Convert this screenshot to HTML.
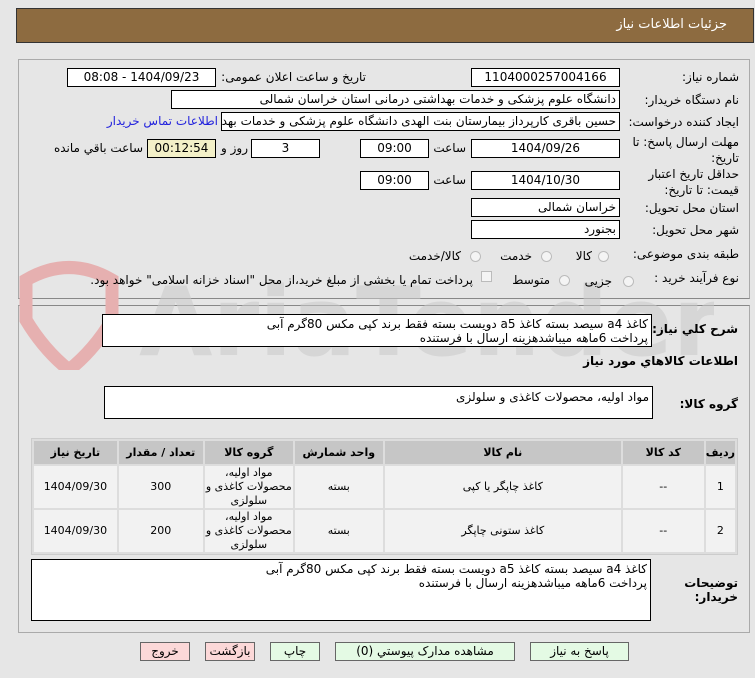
<!DOCTYPE html>
<html><head><meta charset="utf-8"><style>
*{box-sizing:border-box;margin:0;padding:0}
body{width:755px;height:678px;background:#e6e6e6;font-family:"DejaVu Sans","Liberation Sans",sans-serif;font-size:12px;color:#000;position:relative;overflow:hidden;direction:rtl}
.a{position:absolute;white-space:nowrap}
.inp{position:absolute;background:#fff;border:1px solid #000;height:19px;line-height:17px;padding:0 3px;white-space:nowrap;overflow:hidden;font-size:12px}
.c{text-align:center}
.lbl{position:absolute;white-space:nowrap;text-align:right}
.ta{position:absolute;background:#fff;border:1px solid #000;padding:2px 3px;line-height:20px;font-size:12px}
.rad{display:inline-block;width:11px;height:11px;border-radius:50%;border:1px solid #bbb;background:#f4f4f4;vertical-align:middle}
table{position:absolute;border-collapse:separate;border-spacing:2px;background:#ddd;border:1px solid #ccc}
td,th{text-align:center;font-size:11px}
th{background:#c6c6c6;height:23px;font-weight:bold}
td{background:#f2f2f2;height:41px;line-height:14px}
.btn{position:absolute;height:19px;border:1px solid #666;line-height:17px;text-align:center;font-size:12px}
</style></head><body>
<div class="a" style="left:16px;top:8px;width:738px;height:35px;background:#8d6b40;border:1px solid #333"></div>
<div class="a" style="right:28px;top:17px;color:#fff;font-size:13px">جزئیات اطلاعات نیاز</div>
<div class="a" style="left:18px;top:59px;width:732px;height:240px;border:1px solid #aaa;border-bottom:1px solid #888"></div>
<div class="a" style="left:18px;top:305px;width:732px;height:328px;border:1px solid #aaa;border-top:1px solid #888"></div>
<!-- watermark -->
<svg class="a" style="left:14px;top:250px" width="700" height="120"><path d="M12 30 Q55 5 98 30 L98 70 Q80 100 55 120 Q30 100 12 70Z" fill="none" stroke="#e6b0b0" stroke-width="13"/><text x="125" y="105" font-size="95" font-family="DejaVu Sans" font-weight="bold" fill="#cacaca" opacity="0.55" direction="ltr">AriaTender.net</text></svg>

<div class="lbl" style="right:16px;top:70px">شماره نیاز:</div>
<div class="inp c" style="left:471px;top:68px;width:149px">1104000257004166</div>
<div class="lbl" style="right:389px;top:70px">تاریخ و ساعت اعلان عمومی:</div>
<div class="inp c" style="left:67px;top:68px;width:149px">1404/09/23 - 08:08</div>

<div class="lbl" style="right:16px;top:93px">نام دستگاه خریدار:</div>
<div class="inp" style="left:171px;top:90px;width:449px">دانشگاه علوم پزشکی و خدمات بهداشتی درمانی استان خراسان شمالی</div>

<div class="lbl" style="right:16px;top:115px">ایجاد کننده درخواست:</div>
<div class="inp" style="left:221px;top:112px;width:399px">حسین باقری کارپرداز بیمارستان بنت الهدی دانشگاه علوم پزشکی و خدمات بهد</div>
<div class="lbl" style="right:537px;top:114px;color:#2222dd">اطلاعات تماس خریدار</div>

<div class="lbl" style="right:16px;top:134px;line-height:16px;text-align:right">مهلت ارسال پاسخ: تا<br>تاریخ:</div>
<div class="inp c" style="left:471px;top:139px;width:149px">1404/09/26</div>
<div class="lbl" style="right:289px;top:141px">ساعت</div>
<div class="inp c" style="left:360px;top:139px;width:69px">09:00</div>
<div class="inp c" style="left:251px;top:139px;width:69px">3</div>
<div class="lbl" style="right:507px;top:141px">روز و</div>
<div class="inp c" style="left:147px;top:139px;width:69px;background:#f3f0c8">00:12:54</div>
<div class="lbl" style="right:612px;top:141px">ساعت باقي مانده</div>

<div class="lbl" style="right:16px;top:166px;line-height:16px">حداقل تاریخ اعتبار<br>قیمت: تا تاریخ:</div>
<div class="inp c" style="left:471px;top:171px;width:149px">1404/10/30</div>
<div class="lbl" style="right:289px;top:173px">ساعت</div>
<div class="inp c" style="left:360px;top:171px;width:69px">09:00</div>

<div class="lbl" style="right:16px;top:201px">استان محل تحویل:</div>
<div class="inp" style="left:471px;top:198px;width:149px">خراسان شمالی</div>
<div class="lbl" style="right:16px;top:223px">شهر محل تحویل:</div>
<div class="inp" style="left:471px;top:220px;width:149px">بجنورد</div>

<div class="lbl" style="right:16px;top:247px">طبقه بندی موضوعی:</div>
<div class="a" style="left:598px;top:249px"><span class="rad"></span></div>
<div class="lbl" style="right:163px;top:249px">کالا</div>
<div class="a" style="left:541px;top:249px"><span class="rad"></span></div>
<div class="lbl" style="right:223px;top:249px">خدمت</div>
<div class="a" style="left:470px;top:249px"><span class="rad"></span></div>
<div class="lbl" style="right:294px;top:249px">کالا/خدمت</div>

<div class="lbl" style="right:16px;top:271px">نوع فرآیند خرید :</div>
<div class="a" style="left:623px;top:274px"><span class="rad"></span></div>
<div class="lbl" style="right:143px;top:274px">جزیی</div>
<div class="a" style="left:559px;top:273px"><span class="rad"></span></div>
<div class="lbl" style="right:205px;top:273px">متوسط</div>
<div class="a" style="left:481px;top:271px;width:11px;height:11px;border:1px solid #bbb;background:#f4f4f4"></div>
<div class="lbl" style="right:282px;top:273px">پرداخت تمام یا بخشی از مبلغ خرید،از محل "اسناد خزانه اسلامی" خواهد بود.</div>

<div class="lbl" style="right:17px;top:322px;font-weight:bold">شرح کلي نیاز:</div>
<div class="ta" style="left:102px;top:314px;width:550px;height:33px;line-height:14px;padding-top:2px">کاغذ a4 سیصد بسته کاغذ a5 دویست بسته فقط برند کپی مکس 80گرم آبی<br>پرداخت 6ماهه میباشدهزینه ارسال با فرستنده</div>
<div class="lbl" style="right:17px;top:354px;font-weight:bold">اطلاعات کالاهاي مورد نياز</div>
<div class="lbl" style="right:17px;top:397px;font-weight:bold">گروه کالا:</div>
<div class="ta" style="left:104px;top:386px;width:549px;height:33px;padding-top:0">مواد اولیه، محصولات کاغذی و سلولزی</div>

<table style="left:31px;top:438px;width:707px">
<tr><th style="width:29px">ردیف</th><th style="width:81px">کد کالا</th><th style="width:236px">نام کالا</th><th style="width:88px">واحد شمارش</th><th style="width:88px">گروه کالا</th><th style="width:84px">تعداد / مقدار</th><th>تاریخ نیاز</th></tr>
<tr><td>1</td><td>--</td><td>کاغذ چاپگر یا کپی</td><td>بسته</td><td>مواد اولیه،<br>محصولات کاغذی و<br>سلولزی</td><td>300</td><td>1404/09/30</td></tr>
<tr><td>2</td><td>--</td><td>کاغذ ستونی چاپگر</td><td>بسته</td><td>مواد اولیه،<br>محصولات کاغذی و<br>سلولزی</td><td>200</td><td>1404/09/30</td></tr>
</table>

<div class="lbl" style="right:17px;top:576px;font-weight:bold;line-height:14px">توضیحات<br>خریدار:</div>
<div class="ta" style="left:31px;top:559px;width:620px;height:62px;line-height:14px">کاغذ a4 سیصد بسته کاغذ a5 دویست بسته فقط برند کپی مکس 80گرم آبی<br>پرداخت 6ماهه میباشدهزینه ارسال با فرستنده</div>

<div class="btn" style="left:530px;top:642px;width:99px;background:#e4fae4">پاسخ به نیاز</div>
<div class="btn" style="left:335px;top:642px;width:180px;background:#e4fae4">مشاهده مدارک پیوستي (0)</div>
<div class="btn" style="left:270px;top:642px;width:50px;background:#e4fae4">چاپ</div>
<div class="btn" style="left:205px;top:642px;width:50px;background:#fcd8d8">بازگشت</div>
<div class="btn" style="left:140px;top:642px;width:50px;background:#fcd8d8">خروج</div>
</body></html>
